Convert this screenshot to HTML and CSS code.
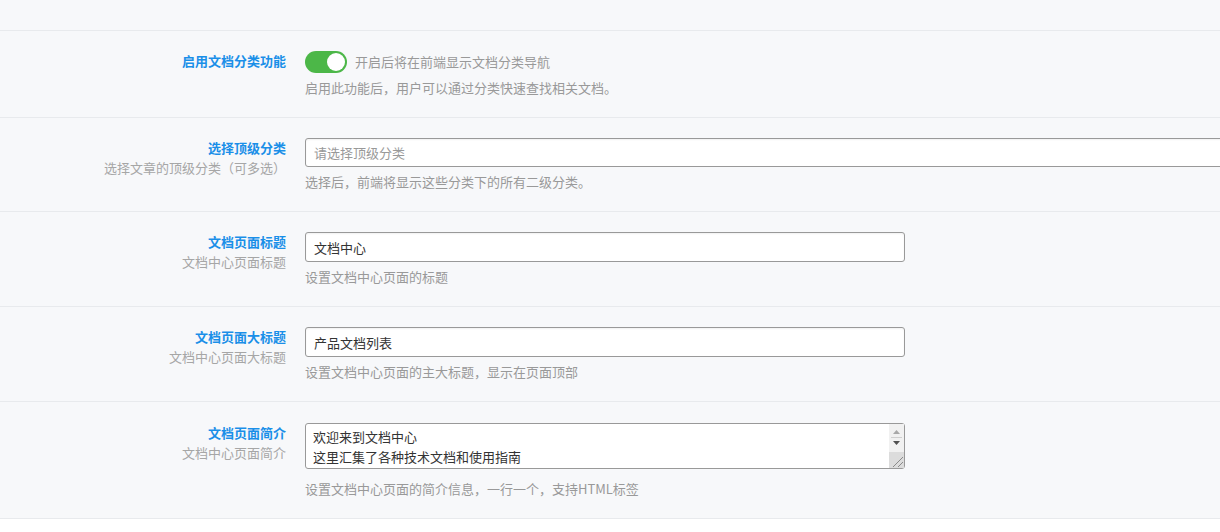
FILE: index.html
```html
<!DOCTYPE html>
<html lang="zh-CN">
<head>
<meta charset="utf-8">
<title>文档设置</title>
<link rel="stylesheet" href="styles.css">
</head>
<body>
<div class="page">
  <div class="top-strip"></div>
  <div class="row">
    <div class="label"><div class="label-title">启用文档分类功能</div></div>
    <div class="control">
      <div class="switch-line">
        <span class="switch"><span class="knob"></span></span>
        <span class="switch-text">开启后将在前端显示文档分类导航</span>
      </div>
      <div class="help">启用此功能后，用户可以通过分类快速查找相关文档。</div>
    </div>
  </div>
  <div class="row">
    <div class="label">
      <div class="label-title">选择顶级分类</div>
      <div class="label-sub">选择文章的顶级分类（可多选）</div>
    </div>
    <div class="control">
      <input class="input input-wide" type="text" placeholder="请选择顶级分类">
      <div class="help">选择后，前端将显示这些分类下的所有二级分类。</div>
    </div>
  </div>
  <div class="row">
    <div class="label">
      <div class="label-title">文档页面标题</div>
      <div class="label-sub">文档中心页面标题</div>
    </div>
    <div class="control">
      <input class="input" type="text" value="文档中心">
      <div class="help">设置文档中心页面的标题</div>
    </div>
  </div>
  <div class="row">
    <div class="label">
      <div class="label-title">文档页面大标题</div>
      <div class="label-sub">文档中心页面大标题</div>
    </div>
    <div class="control">
      <input class="input" type="text" value="产品文档列表">
      <div class="help">设置文档中心页面的主大标题，显示在页面顶部</div>
    </div>
  </div>
  <div class="row row-last">
    <div class="label">
      <div class="label-title">文档页面简介</div>
      <div class="label-sub">文档中心页面简介</div>
    </div>
    <div class="control">
      <div class="textarea-wrap">
        <textarea class="textarea">欢迎来到文档中心
这里汇集了各种技术文档和使用指南</textarea>
        <svg class="fake-scroll" width="15" height="44" viewBox="0 0 15 44" aria-hidden="true">
          <rect x="0" y="0" width="15" height="28" fill="#f1f1f1"/>
          <path d="M4 10 L11 10 L7.5 6 Z" fill="#a8a8a8"/>
          <line x1="2" y1="13.5" x2="13" y2="13.5" stroke="#cfcfcf"/>
          <path d="M4 17 L11 17 L7.5 21 Z" fill="#505050"/>
          <rect x="0" y="28" width="15" height="16" fill="#dcdcdc"/>
          <line x1="14" y1="33" x2="4" y2="43" stroke="#8a8a8a"/>
          <line x1="14" y1="38" x2="9" y2="43" stroke="#8a8a8a"/>
        </svg>
      </div>
      <div class="help">设置文档中心页面的简介信息，一行一个，支持HTML标签</div>
    </div>
  </div>
</div>
</body>
</html>
```
FILE: styles.css
```css
html, body {
  margin: 0;
  padding: 0;
  background: #ffffff;
  overflow: hidden;
}
body {
  font-family: "Noto Sans CJK SC", "Noto Sans", sans-serif;
  font-size: 13px;
  color: #333;
}
.page {
  background: #f7f8fa;
}
.top-strip {
  height: 30px;
  border-bottom: 1px solid #e8eaed;
}
.row {
  display: flex;
  padding: 20px 0 19px;
  border-bottom: 1px solid #e8eaed;
}
.label {
  width: 286px;
  flex-shrink: 0;
  text-align: right;
}
.label-title {
  color: #1a8fe8;
  font-weight: bold;
  line-height: 20px;
}
.label-sub {
  color: #a6a6a6;
  line-height: 20px;
}
.control {
  margin-left: 19px;
  flex: 1;
  min-width: 0;
}
.switch-line {
  display: flex;
  align-items: center;
  height: 22px;
}
.switch {
  width: 42px;
  height: 22px;
  border-radius: 11px;
  background: #4cb748;
  position: relative;
  flex-shrink: 0;
}
.knob {
  position: absolute;
  right: 2px;
  top: 2px;
  width: 18px;
  height: 18px;
  border-radius: 50%;
  background: #fff;
}
.switch-text {
  margin-left: 8px;
  color: #999;
  line-height: 20px;
}
.help {
  margin-top: 5px;
  color: #999;
  line-height: 20px;
}
.input {
  display: block;
  box-sizing: border-box;
  width: 600px;
  height: 30px;
  margin: 0;
  padding: 0 8px;
  border: 1px solid #999;
  border-radius: 3px;
  background: #fff;
  font-family: inherit;
  font-size: 13px;
  color: #333;
  box-shadow: inset 0 1px 2px rgba(0,0,0,0.06);
}
.input::placeholder {
  color: #999;
}
.input-wide {
  width: 960px;
  height: 29px;
}
.row-last {
  padding-top: 21px;
}
.textarea-wrap {
  position: relative;
  width: 600px;
  height: 46px;
  margin-bottom: 10px;
}
.textarea {
  display: block;
  box-sizing: border-box;
  width: 600px;
  height: 46px;
  margin: 0;
  padding: 3px 7px;
  border: 1px solid #999;
  border-radius: 3px;
  background: #fff;
  font-family: inherit;
  font-size: 13px;
  line-height: 20px;
  color: #333;
  overflow: hidden;
  resize: none;
}
.fake-scroll {
  position: absolute;
  top: 1px;
  right: 1px;
  display: block;
}
.textarea-wrap + .help {
  margin-top: 0;
}
```
